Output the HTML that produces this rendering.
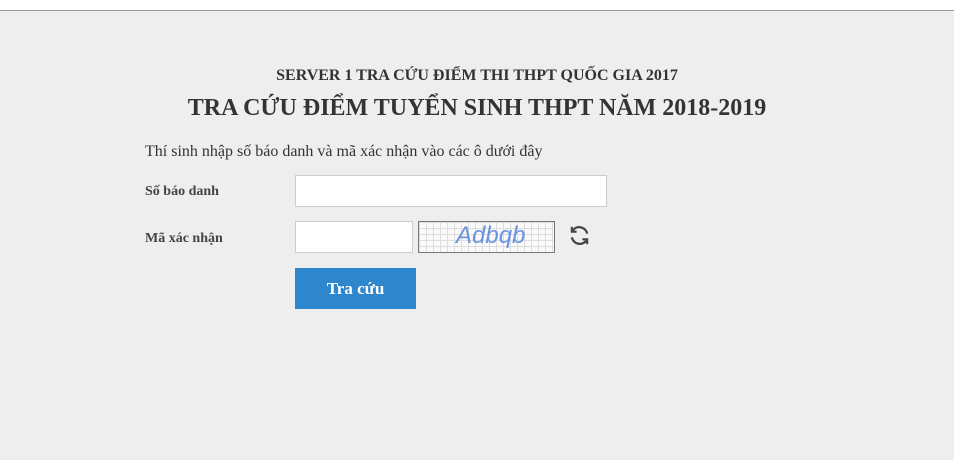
<!DOCTYPE html>
<html><head><meta charset="utf-8"><style>
*{margin:0;padding:0;box-sizing:border-box}
body{width:954px;height:460px;background:#eee;font-family:"Liberation Serif",serif;color:#333;position:relative;overflow:hidden}
.top{position:absolute;left:0;top:0;width:954px;height:11px;background:#fff;border-bottom:1px solid #999}
.abs{position:absolute;white-space:nowrap}
.h1{left:0;width:954px;text-align:center;top:67px;font-size:16px;font-weight:bold}
.h2{left:0;width:954px;text-align:center;top:95px;font-size:24px;font-weight:bold}
.inst{left:145px;top:143px;font-size:16px}
.lbl{left:145px;font-size:14px;font-weight:bold;color:#444}
.in{position:absolute;background:#fff;border:1px solid #ccc}
.btn{position:absolute;left:295px;top:268px;width:121px;height:41px;background:#2e86cd;color:#fff;font-weight:bold;font-size:17px;text-align:center;line-height:41px}
.cap{position:absolute;left:418px;top:221px;width:137px;height:32px;border:1px solid #777;background-color:#fafafa;
background-image:linear-gradient(#ddd 1px,transparent 1px),linear-gradient(90deg,#ddd 1px,transparent 1px);background-size:7px 6px;overflow:hidden}
.cap span{position:absolute;left:37px;top:0px;font-family:"Liberation Sans",sans-serif;font-style:italic;font-size:24px;color:#6a93e0}
</style></head><body>
<div class="top"></div>
<div class="abs h1">SERVER 1 TRA CỨU ĐIỂM THI THPT QUỐC GIA 2017</div>
<div class="abs h2">TRA CỨU ĐIỂM TUYỂN SINH THPT NĂM 2018-2019</div>
<div class="abs inst">Thí sinh nhập số báo danh và mã xác nhận vào các ô dưới đây</div>
<div class="abs lbl" style="top:184px">Số báo danh</div>
<div class="in" style="left:295px;top:175px;width:312px;height:32px"></div>
<div class="abs lbl" style="top:231px">Mã xác nhận</div>
<div class="in" style="left:295px;top:221px;width:118px;height:32px"></div>
<div class="cap"><span>Adbqb</span></div>
<svg style="position:absolute;left:568px;top:224px" width="23" height="23" viewBox="0 0 24 24" fill="none" stroke="#444" stroke-width="2.4">
<path d="M20 10A8.5 8.5 0 0 0 5 6.5"/><path d="M4 14A8.5 8.5 0 0 0 19 17.5"/>
<path d="M4 3v5h5" stroke-width="2.2"/><path d="M20 21v-5h-5" stroke-width="2.2"/></svg>
<div class="btn">Tra cứu</div>
</body></html>
